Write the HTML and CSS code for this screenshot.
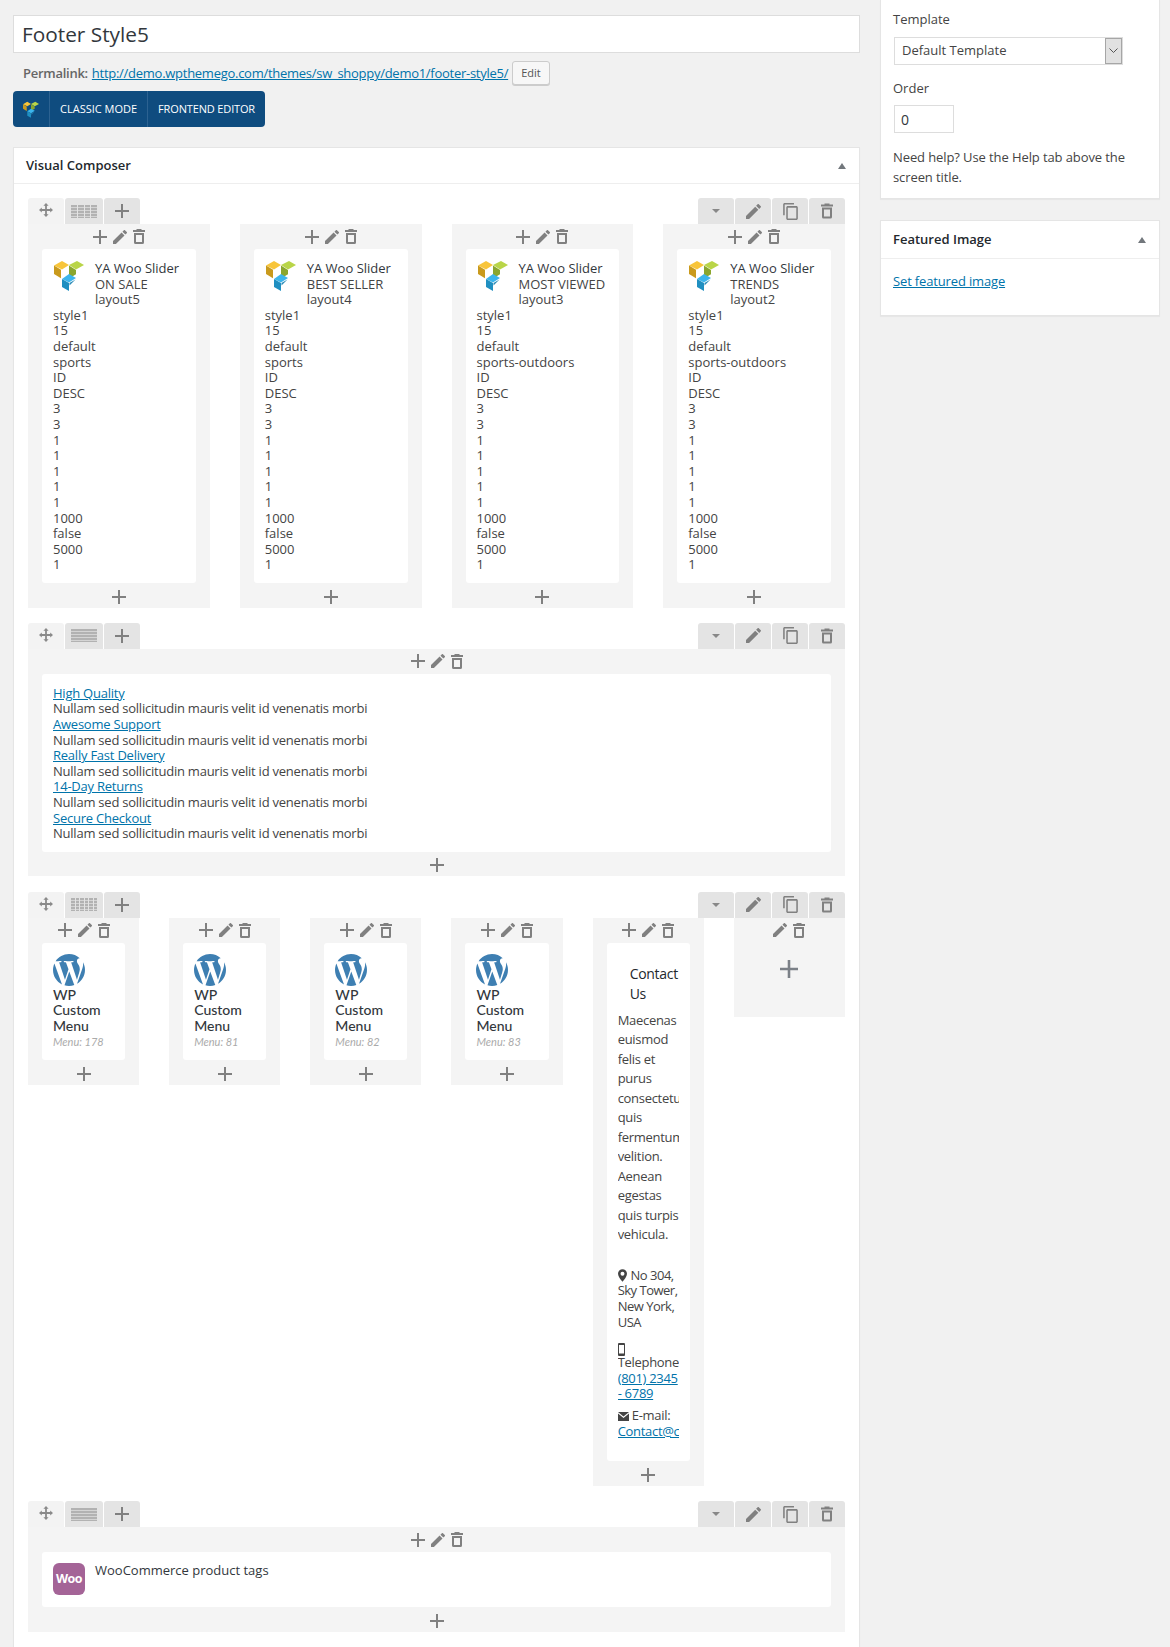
FILE: index.html
```html
<!DOCTYPE html>
<html lang="en">
<head>
  <meta charset="UTF-8">
  <title>Footer Style5</title>
  <link rel="stylesheet" href="styles.css">
</head>
<body>

  <svg class="sprites" width="0" height="0">
    <symbol id="i-plus" viewBox="0 0 14 14"><path d="M6 0h2v6h6v2H8v6H6V8H0V6h6z"/></symbol>
    <symbol id="i-pencil" viewBox="3 3 18 18"><path d="M3 17.25V21h3.75L17.81 9.94l-3.75-3.75L3 17.25zM20.71 7.04a1 1 0 000-1.41l-2.34-2.34a1 1 0 00-1.41 0l-1.83 1.83 3.75 3.75 1.83-1.83z"/></symbol>
    <symbol id="i-trash" viewBox="0 0 12 15"><path d="M3.5 0h5v1H12v2H0V1h3.5zM1 4h10v9.5a1.5 1.5 0 01-1.5 1.5h-7A1.5 1.5 0 011 13.5zm2 2v7h6V6z"/></symbol>
    <symbol id="i-copy" viewBox="2 1 19 22"><path d="M16 1H4c-1.1 0-2 .9-2 2v14h2V3h12V1zm3 4H8c-1.1 0-2 .9-2 2v14c0 1.1.9 2 2 2h11c1.1 0 2-.9 2-2V7c0-1.1-.9-2-2-2zm0 16H8V7h11v14z"/></symbol>
    <symbol id="i-move" viewBox="0 0 14 14"><path d="M7 0l2.6 2.8H7.9v3.3h3.3V4.400L14 7l-2.800 2.600V7.900H7.900v3.300h1.700L7 14l-2.600-2.800h1.700V7.900H2.800v1.700L0 7l2.800-2.600v1.700h3.300V2.800H4.400z"/></symbol>
    <symbol id="i-vc" viewBox="0 0 30 31">
      <path fill="#f8c53a" d="M0 5.500L8 1l7 4-7 4.500z"/>
      <path fill="#c99a1d" d="M0 5.500v8.500l7 4.200v-8.400z"/>
      <path fill="#b9d548" d="M15 5l8-4 7 4-8 4.500z"/>
      <path fill="#8ba62e" d="M15 5.500l7 4.500v4.200L15 18.500z"/>
      <path fill="#3cb5ec" d="M8 19l7-5 7 4-7 4.500z"/>
      <path fill="#1f8fc1" d="M8 19l7 4v8l-7-4z"/>
      <path fill="#2a8bb8" d="M15.500 23l6-3.600-6 6z"/>
    </symbol>
    <symbol id="i-wp" viewBox="1.2 1.2 21.6 21.6"><path d="M21.469 6.825c.84 1.537 1.318 3.3 1.318 5.175 0 3.979-2.156 7.456-5.363 9.325l3.295-9.527c.615-1.54.82-2.771.82-3.864 0-.405-.026-.78-.07-1.11m-7.981.105c.647-.03 1.232-.105 1.232-.105.582-.075.514-.93-.067-.899 0 0-1.755.135-2.88.135-1.064 0-2.85-.15-2.85-.15-.585-.03-.661.855-.075.885 0 0 .54.061 1.125.09l1.68 4.605-2.37 7.08L5.354 6.9c.649-.03 1.234-.1 1.234-.1.585-.075.516-.93-.065-.896 0 0-1.746.138-2.874.138-.2 0-.438-.008-.69-.015C4.911 3.15 8.235 1.215 12 1.215c2.809 0 5.365 1.072 7.286 2.833-.046-.003-.091-.009-.141-.009-1.06 0-1.812.923-1.812 1.914 0 .89.513 1.643 1.06 2.531.411.72.89 1.643.89 2.977 0 .915-.354 2.004-.821 3.5l-1.076 3.59-3.9-11.61.001.014zM12 22.784c-1.059 0-2.081-.153-3.048-.437l3.237-9.406 3.315 9.087c.024.053.05.101.078.149-1.12.393-2.325.609-3.582.609M1.211 12c0-1.564.336-3.05.935-4.39L7.29 21.709C3.694 19.96 1.212 16.271 1.211 12"/></symbol>
  </svg>

  <div class="page">
    <main class="main">
      <input class="title-input" type="text" value="Footer Style5">

      <div class="permalink">
        <strong>Permalink:</strong>
        <a href="#">http://demo.wpthemego.com/themes/sw_shoppy/demo1/footer-style5/</a>
        <span class="edit-btn">Edit</span>
      </div>

      <div class="mode-bar">
        <span class="mode-logo"><svg class="mode-logo-svg"><use href="#i-vc"/></svg></span>
        <span class="mode-btn">CLASSIC MODE</span>
        <span class="mode-btn">FRONTEND EDITOR</span>
      </div>

      <section class="panel vc-panel">
        <div class="panel-head">
          <h2>Visual Composer</h2>
          <span class="caret"></span>
        </div>

        <div class="vc-body">

          <!-- Zeile 1 -->
          <div class="vc-row">
            <div class="row-tabs">
              <div class="tab-group">
                <span class="tab tab-move"><svg class="ico-move"><use href="#i-move"/></svg></span>
                <span class="tab tab-layout"><span class="layout-icon"><i></i><i></i><i></i><i></i></span></span>
                <span class="tab"><svg class="ico-plus"><use href="#i-plus"/></svg></span>
              </div>
              <div class="tab-group">
                <span class="tab"><span class="tab-caret"></span></span>
                <span class="tab"><svg class="ico-pencil-lg"><use href="#i-pencil"/></svg></span>
                <span class="tab"><svg class="ico-copy"><use href="#i-copy"/></svg></span>
                <span class="tab"><svg class="ico-trash-lg"><use href="#i-trash"/></svg></span>
              </div>
            </div>
            <div class="cols cols-4">
              <div class="col">
                <div class="col-tools"><svg class="ico-plus"><use href="#i-plus"/></svg><svg class="ico-pencil"><use href="#i-pencil"/></svg><svg class="ico-trash"><use href="#i-trash"/></svg></div>
                <div class="card">
                  <div class="slider-head">
                    <svg class="slider-logo"><use href="#i-vc"/></svg>
                    <div class="slider-title"><span class="el-name">YA Woo Slider</span><br>ON SALE<br>layout5</div>
                  </div>
                  style1<br>15<br>default<br>sports<br>ID<br>DESC<br>3<br>3<br>1<br>1<br>1<br>1<br>1<br>1000<br>false<br>5000<br>1
                </div>
                <div class="col-add"><svg class="ico-plus"><use href="#i-plus"/></svg></div>
              </div>
              <div class="col">
                <div class="col-tools"><svg class="ico-plus"><use href="#i-plus"/></svg><svg class="ico-pencil"><use href="#i-pencil"/></svg><svg class="ico-trash"><use href="#i-trash"/></svg></div>
                <div class="card">
                  <div class="slider-head">
                    <svg class="slider-logo"><use href="#i-vc"/></svg>
                    <div class="slider-title"><span class="el-name">YA Woo Slider</span><br>BEST SELLER<br>layout4</div>
                  </div>
                  style1<br>15<br>default<br>sports<br>ID<br>DESC<br>3<br>3<br>1<br>1<br>1<br>1<br>1<br>1000<br>false<br>5000<br>1
                </div>
                <div class="col-add"><svg class="ico-plus"><use href="#i-plus"/></svg></div>
              </div>
              <div class="col">
                <div class="col-tools"><svg class="ico-plus"><use href="#i-plus"/></svg><svg class="ico-pencil"><use href="#i-pencil"/></svg><svg class="ico-trash"><use href="#i-trash"/></svg></div>
                <div class="card">
                  <div class="slider-head">
                    <svg class="slider-logo"><use href="#i-vc"/></svg>
                    <div class="slider-title"><span class="el-name">YA Woo Slider</span><br>MOST VIEWED<br>layout3</div>
                  </div>
                  style1<br>15<br>default<br>sports-outdoors<br>ID<br>DESC<br>3<br>3<br>1<br>1<br>1<br>1<br>1<br>1000<br>false<br>5000<br>1
                </div>
                <div class="col-add"><svg class="ico-plus"><use href="#i-plus"/></svg></div>
              </div>
              <div class="col">
                <div class="col-tools"><svg class="ico-plus"><use href="#i-plus"/></svg><svg class="ico-pencil"><use href="#i-pencil"/></svg><svg class="ico-trash"><use href="#i-trash"/></svg></div>
                <div class="card">
                  <div class="slider-head">
                    <svg class="slider-logo"><use href="#i-vc"/></svg>
                    <div class="slider-title"><span class="el-name">YA Woo Slider</span><br>TRENDS<br>layout2</div>
                  </div>
                  style1<br>15<br>default<br>sports-outdoors<br>ID<br>DESC<br>3<br>3<br>1<br>1<br>1<br>1<br>1<br>1000<br>false<br>5000<br>1
                </div>
                <div class="col-add"><svg class="ico-plus"><use href="#i-plus"/></svg></div>
              </div>
            </div>
          </div>

          <!-- Zeile 2 -->
          <div class="vc-row">
            <div class="row-tabs">
              <div class="tab-group">
                <span class="tab tab-move"><svg class="ico-move"><use href="#i-move"/></svg></span>
                <span class="tab tab-layout"><span class="layout-icon"><i></i></span></span>
                <span class="tab"><svg class="ico-plus"><use href="#i-plus"/></svg></span>
              </div>
              <div class="tab-group">
                <span class="tab"><span class="tab-caret"></span></span>
                <span class="tab"><svg class="ico-pencil-lg"><use href="#i-pencil"/></svg></span>
                <span class="tab"><svg class="ico-copy"><use href="#i-copy"/></svg></span>
                <span class="tab"><svg class="ico-trash-lg"><use href="#i-trash"/></svg></span>
              </div>
            </div>
            <div class="cols">
              <div class="col">
                <div class="col-tools"><svg class="ico-plus"><use href="#i-plus"/></svg><svg class="ico-pencil"><use href="#i-pencil"/></svg><svg class="ico-trash"><use href="#i-trash"/></svg></div>
                <div class="card card-copy">
                  <a href="#">High Quality</a><br>Nullam sed sollicitudin mauris velit id venenatis morbi<br>
                  <a href="#">Awesome Support</a><br>Nullam sed sollicitudin mauris velit id venenatis morbi<br>
                  <a href="#">Really Fast Delivery</a><br>Nullam sed sollicitudin mauris velit id venenatis morbi<br>
                  <a href="#">14-Day Returns</a><br>Nullam sed sollicitudin mauris velit id venenatis morbi<br>
                  <a href="#">Secure Checkout</a><br>Nullam sed sollicitudin mauris velit id venenatis morbi
                </div>
                <div class="col-add col-add-short"><svg class="ico-plus"><use href="#i-plus"/></svg></div>
              </div>
            </div>
          </div>

          <!-- Zeile 3 -->
          <div class="vc-row">
            <div class="row-tabs">
              <div class="tab-group">
                <span class="tab tab-move"><svg class="ico-move"><use href="#i-move"/></svg></span>
                <span class="tab tab-layout"><span class="layout-icon"><i></i><i></i><i></i><i></i><i></i><i></i></span></span>
                <span class="tab"><svg class="ico-plus"><use href="#i-plus"/></svg></span>
              </div>
              <div class="tab-group">
                <span class="tab"><span class="tab-caret"></span></span>
                <span class="tab"><svg class="ico-pencil-lg"><use href="#i-pencil"/></svg></span>
                <span class="tab"><svg class="ico-copy"><use href="#i-copy"/></svg></span>
                <span class="tab"><svg class="ico-trash-lg"><use href="#i-trash"/></svg></span>
              </div>
            </div>
            <div class="cols cols-6">
              <div class="col">
                <div class="col-tools"><svg class="ico-plus"><use href="#i-plus"/></svg><svg class="ico-pencil"><use href="#i-pencil"/></svg><svg class="ico-trash"><use href="#i-trash"/></svg></div>
                <div class="card">
                  <svg class="wp-logo"><use href="#i-wp"/></svg>
                  <div class="wp-name">WP Custom Menu</div>
                  <div class="wp-meta">Menu: 178</div>
                </div>
                <div class="col-add"><svg class="ico-plus"><use href="#i-plus"/></svg></div>
              </div>
              <div class="col">
                <div class="col-tools"><svg class="ico-plus"><use href="#i-plus"/></svg><svg class="ico-pencil"><use href="#i-pencil"/></svg><svg class="ico-trash"><use href="#i-trash"/></svg></div>
                <div class="card">
                  <svg class="wp-logo"><use href="#i-wp"/></svg>
                  <div class="wp-name">WP Custom Menu</div>
                  <div class="wp-meta">Menu: 81</div>
                </div>
                <div class="col-add"><svg class="ico-plus"><use href="#i-plus"/></svg></div>
              </div>
              <div class="col">
                <div class="col-tools"><svg class="ico-plus"><use href="#i-plus"/></svg><svg class="ico-pencil"><use href="#i-pencil"/></svg><svg class="ico-trash"><use href="#i-trash"/></svg></div>
                <div class="card">
                  <svg class="wp-logo"><use href="#i-wp"/></svg>
                  <div class="wp-name">WP Custom Menu</div>
                  <div class="wp-meta">Menu: 82</div>
                </div>
                <div class="col-add"><svg class="ico-plus"><use href="#i-plus"/></svg></div>
              </div>
              <div class="col">
                <div class="col-tools"><svg class="ico-plus"><use href="#i-plus"/></svg><svg class="ico-pencil"><use href="#i-pencil"/></svg><svg class="ico-trash"><use href="#i-trash"/></svg></div>
                <div class="card">
                  <svg class="wp-logo"><use href="#i-wp"/></svg>
                  <div class="wp-name">WP Custom Menu</div>
                  <div class="wp-meta">Menu: 83</div>
                </div>
                <div class="col-add"><svg class="ico-plus"><use href="#i-plus"/></svg></div>
              </div>
              <div class="col">
                <div class="col-tools"><svg class="ico-plus"><use href="#i-plus"/></svg><svg class="ico-pencil"><use href="#i-pencil"/></svg><svg class="ico-trash"><use href="#i-trash"/></svg></div>
                <div class="card card-contact">
                  <div class="contact-clip">
                    <h4 class="contact-title">Contact Us</h4>
                    <p class="contact-text">Maecenas euismod felis et purus consectetur quis fermentum velition. Aenean egestas quis turpis vehicula.</p>
                    <div class="contact-address">
                      <svg class="ico-pin" viewBox="0 0 10 14"><path fill-rule="evenodd" d="M5 0a5 5 0 015 5c0 2.800-3 6.500-5 9-2-2.500-5-6.200-5-9a5 5 0 015-5zm0 2.800a2.200 2.200 0 100 4.400 2.200 2.200 0 000-4.400z"/></svg>
                      No 304, Sky Tower, New York, USA
                    </div>
                    <svg class="ico-phone" viewBox="0 0 7 13"><path fill-rule="evenodd" d="M1 0h5a1 1 0 011 1v11a1 1 0 01-1 1H1a1 1 0 01-1-1V1a1 1 0 011-1zm0 2v8.500h5V2z"/></svg>
                    <div class="contact-phone">
                      Telephone:<br><a href="#">(801) 2345 - 6789</a>
                    </div>
                    <div class="contact-mail">
                      <svg class="ico-mail" viewBox="0 0 11 9"><path d="M0 0h11L5.500 4.500zM0 1.500l5.500 4.500L11 1.500V9H0z"/></svg>
                      E-mail:<br><a href="#">Contact@company.com</a>
                    </div>
                  </div>
                </div>
                <div class="col-add"><svg class="ico-plus"><use href="#i-plus"/></svg></div>
              </div>
              <div class="col col-empty">
                <div class="col-tools"><svg class="ico-pencil"><use href="#i-pencil"/></svg><svg class="ico-trash"><use href="#i-trash"/></svg></div>
                <div class="col-empty-add"><svg class="ico-plus-lg"><use href="#i-plus"/></svg></div>
              </div>
            </div>
          </div>

          <!-- Zeile 4 -->
          <div class="vc-row">
            <div class="row-tabs">
              <div class="tab-group">
                <span class="tab tab-move"><svg class="ico-move"><use href="#i-move"/></svg></span>
                <span class="tab tab-layout"><span class="layout-icon"><i></i></span></span>
                <span class="tab"><svg class="ico-plus"><use href="#i-plus"/></svg></span>
              </div>
              <div class="tab-group">
                <span class="tab"><span class="tab-caret"></span></span>
                <span class="tab"><svg class="ico-pencil-lg"><use href="#i-pencil"/></svg></span>
                <span class="tab"><svg class="ico-copy"><use href="#i-copy"/></svg></span>
                <span class="tab"><svg class="ico-trash-lg"><use href="#i-trash"/></svg></span>
              </div>
            </div>
            <div class="cols">
              <div class="col">
                <div class="col-tools"><svg class="ico-plus"><use href="#i-plus"/></svg><svg class="ico-pencil"><use href="#i-pencil"/></svg><svg class="ico-trash"><use href="#i-trash"/></svg></div>
                <div class="card card-woo">
                  <span class="woo-logo">Woo</span>
                  <span class="el-name">WooCommerce product tags</span>
                </div>
                <div class="col-add"><svg class="ico-plus"><use href="#i-plus"/></svg></div>
              </div>
            </div>
          </div>

        </div>
      </section>
    </main>

    <aside class="side">
      <section class="panel attr-panel">
        <label class="attr-label">Template</label>
        <div class="fake-select">
          <span>Default Template</span>
          <span class="fake-select-arrow"><svg width="9" height="5" viewBox="0 0 9 5"><path d="M.5.5l4 4 4-4" fill="none" stroke="#555"/></svg></span>
        </div>
        <label class="attr-label attr-label-order">Order</label>
        <input class="order-input" type="text" value="0">
        <p class="help-text">Need help? Use the Help tab above the screen title.</p>
      </section>

      <section class="panel image-panel">
        <div class="panel-head">
          <h2>Featured Image</h2>
          <span class="caret"></span>
        </div>
        <div class="image-body"><a href="#">Set featured image</a></div>
      </section>
    </aside>
  </div>

</body>
</html>
```
FILE: styles.css
```css
* {
  box-sizing: border-box;
}
html, body {
  margin: 0;
  padding: 0;
}
body {
  font-family: "Open Sans", sans-serif;
  font-size: 13px;
  line-height: 15.6px;
  color: #444;
  background-color: #f1f1f1;
}
a {
  color: #0073aa;
}
.sprites {
  position: absolute;
}
svg {
  fill: #808080;
  display: block;
}

.page {
  display: flex;
  align-items: flex-start;
  gap: 20px;
  height: 1647px;
  padding-left: 13px;
  overflow: hidden;
}
.main {
  width: 847px;
  padding-top: 15px;
}
.side {
  width: 280px;
}

/* Titel */
.title-input {
  display: block;
  width: 100%;
  height: 38px;
  padding: 3px 8px;
  border: 1px solid #ddd;
  background: #fff;
  font-family: inherit;
  font-size: 20.8px;
  color: #32373c;
  outline: none;
}
.permalink {
  display: flex;
  align-items: center;
  gap: 4px;
  height: 24px;
  margin-top: 8px;
  padding-left: 10px;
  color: #666;
  letter-spacing: -0.27px;
}
.permalink strong {
  font-weight: 600;
  margin-top: 2px;
}
.permalink a {
  margin-top: 2px;
}
.edit-btn {
  height: 24px;
  padding: 0 8px;
  border: 1px solid #ccc;
  border-radius: 3px;
  background: #f7f7f7;
  font-size: 11px;
  letter-spacing: 0;
  line-height: 22px;
  color: #555;
  box-shadow: 0 1px 0 #ccc;
}

/* Moduswahl */
.mode-bar {
  display: inline-flex;
  height: 36px;
  margin-top: 6px;
  border-radius: 4px;
  background-color: #0f4c7f;
  color: #fff;
  font-size: 11px;
  line-height: 36px;
  vertical-align: top;
}
.mode-logo {
  display: flex;
  align-items: center;
  justify-content: center;
  width: 37px;
  border-right: 1px solid #2c6291;
}
.mode-logo-svg {
  width: 16px;
  height: 17px;
}
.mode-btn {
  padding: 0 10px;
  border-right: 1px solid #2c6291;
}
.mode-btn:last-child {
  border-right: none;
  padding-right: 10px;
  letter-spacing: -0.15px;
}

/* Boxen */
.panel {
  border: 1px solid #e5e5e5;
  background: #fff;
  box-shadow: 0 1px 1px rgba(0, 0, 0, 0.04);
}
.panel-head {
  display: flex;
  align-items: center;
  justify-content: space-between;
  height: 36px;
  padding: 1px 12px 0;
  border-bottom: 1px solid #eee;
}
.panel-head h2 {
  margin: 0;
  font-size: 13px;
  font-weight: 600;
  color: #23282d;
}
.caret {
  width: 0;
  height: 0;
  border-left: 4px solid transparent;
  border-right: 4px solid transparent;
  border-bottom: 6px solid #72777c;
  margin-right: 1px;
}
.vc-panel {
  margin-top: 20px;
  height: 1520px;
}
.vc-body {
  padding: 14px 14px;
}

/* Zeilen */
.vc-row {
  margin-bottom: 15px;
}
.vc-row:nth-of-type(2) {
  margin-bottom: 16px;
}
.row-tabs {
  display: flex;
  justify-content: space-between;
}
.tab-group {
  display: flex;
  gap: 1px;
}
.tab {
  display: flex;
  align-items: center;
  justify-content: center;
  width: 36px;
  height: 26px;
  border-radius: 3px 3px 0 0;
  background: #e4e4e4;
}
.tab-move {
  background: #f3f3f3;
}
.tab-layout {
  width: 38px;
}
.layout-icon {
  display: flex;
  gap: 1px;
  width: 26px;
  height: 13px;
}
.layout-icon i {
  flex: 1;
  background: repeating-linear-gradient(to bottom, #b2b2b2 0, #b2b2b2 2px, #d4d4d4 2px, #d4d4d4 3px);
}
.tab-caret {
  width: 0;
  height: 0;
  border-left: 4px solid transparent;
  border-right: 4px solid transparent;
  border-top: 4px solid #888;
}
.cols {
  display: grid;
  grid-template-columns: minmax(0, 1fr);
  align-items: start;
  gap: 30px;
}
.cols-4 {
  grid-template-columns: repeat(4, minmax(0, 1fr));
}
.cols-6 {
  grid-template-columns: repeat(6, minmax(0, 1fr));
}
.col {
  padding: 0 14px;
  background: #f4f4f4;
}
.col-tools {
  display: flex;
  align-items: center;
  justify-content: center;
  gap: 6px;
  height: 25px;
}
.col-add {
  display: flex;
  align-items: center;
  justify-content: center;
  height: 25px;
  padding-top: 3px;
}
.col-add-short {
  height: 24px;
}
.card {
  padding: 12px 11px 10px;
  border-radius: 3px;
  background: #fff;
}
.card-copy {
  letter-spacing: -0.23px;
}

/* Icons */
.ico-plus {
  width: 14px;
  height: 14px;
}
.ico-pencil {
  width: 14px;
  height: 14px;
}
.ico-trash {
  width: 12px;
  height: 15px;
}
.ico-pencil-lg {
  width: 15px;
  height: 15px;
}
.ico-trash-lg {
  width: 12px;
  height: 16px;
}
.ico-copy {
  width: 15px;
  height: 17px;
}
.ico-move {
  width: 14px;
  height: 14px;
  margin-bottom: 2px;
  fill: #8a8a8a;
}
.ico-plus-lg {
  width: 18px;
  height: 18px;
  fill: #7b8087;
}

/* Elemente */
.el-name {
  color: #32373c;
}
.slider-head {
  display: flex;
  gap: 11px;
}
.slider-logo {
  flex: none;
  width: 30px;
  height: 31px;
  margin-left: 1px;
  margin-top: -1px;
}
.wp-logo {
  width: 32px;
  height: 32px;
  fill: #3e7fb2;
  margin-top: -1px;
}
.wp-name {
  font-family: Lato, sans-serif;
  font-size: 14px;
  font-weight: 500;
  color: #32373c;
  margin-top: 1px;
}
.wp-meta {
  font-family: Lato, sans-serif;
  font-size: 11px;
  font-style: italic;
  line-height: 16px;
  color: #aaa;
}
.card-woo {
  display: flex;
  gap: 10px;
  height: 55px;
  padding-top: 11px;
}
.woo-logo {
  flex: none;
  width: 32px;
  height: 32px;
  border-radius: 6px;
  background: #a46497;
  color: #fff;
  font-size: 12.5px;
  font-weight: 700;
  letter-spacing: -0.5px;
  line-height: 32px;
  text-align: center;
}

/* Kontakt */
.card-contact {
  padding-top: 21px;
  padding-bottom: 22px;
}
.contact-clip {
  overflow: hidden;
  letter-spacing: -0.3px;
}
.contact-title {
  margin: 0 0 7px;
  padding-left: 12px;
  font-size: 14px;
  font-weight: 400;
  line-height: 20px;
  color: #23282d;
}
.contact-text {
  margin: 0 0 23px;
  line-height: 19.5px;
}
.contact-address {
  margin-bottom: 13px;
  letter-spacing: -0.5px;
}
.contact-phone {
  margin-bottom: 6px;
}
.ico-pin {
  display: inline-block;
  width: 9px;
  height: 13px;
  margin-right: 1px;
  fill: #444;
  vertical-align: -2px;
}
.ico-phone {
  width: 7px;
  height: 13px;
  margin-bottom: -1px;
  fill: #444;
}
.ico-mail {
  display: inline-block;
  width: 11px;
  height: 9px;
  fill: #444;
  vertical-align: -1px;
}
.col-empty {
  padding: 0;
}
.col-empty-add {
  display: flex;
  align-items: center;
  justify-content: center;
  height: 74px;
  padding-bottom: 22px;
}

/* Seitenleiste */
.attr-panel {
  height: 199px;
  padding: 12px 12px 0;
  border-top: none;
}
.attr-label {
  display: block;
  color: #444;
}
.fake-select {
  display: flex;
  align-items: center;
  justify-content: space-between;
  width: 229px;
  height: 28px;
  margin: 9px 0 0 1px;
  padding-left: 7px;
  border: 1px solid #ddd;
  background: #fff;
}
.fake-select-arrow {
  display: flex;
  align-items: center;
  justify-content: center;
  width: 17px;
  height: 26px;
  border: 1px solid #a6a6a6;
  background: #e1e1e1;
}
.attr-label-order {
  margin-top: 16px;
}
.order-input {
  display: block;
  width: 60px;
  height: 28px;
  margin: 9px 0 0 1px;
  padding: 0 6px;
  border: 1px solid #ddd;
  font-family: inherit;
  font-size: 14px;
  color: #32373c;
  outline: none;
}
.help-text {
  margin: 14px 0 0;
  line-height: 20px;
  letter-spacing: -0.1px;
}
.image-panel {
  height: 96px;
  margin-top: 21px;
}
.image-panel .panel-head {
  height: 38px;
}
.image-body {
  padding: 15px 12px;
  letter-spacing: -0.15px;
}
```
